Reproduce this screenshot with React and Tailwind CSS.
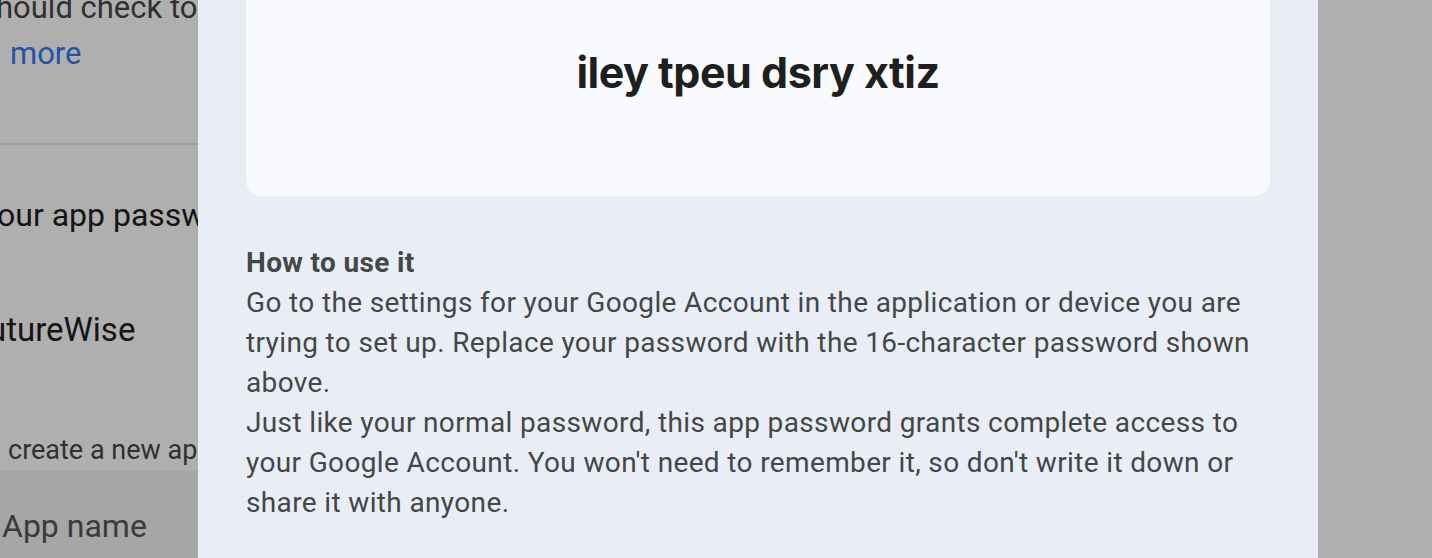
export default function App() {
  return (
    <div className="flex h-[558px] w-[1432px] overflow-hidden bg-[#afafaf] font-['Roboto',_'Liberation_Sans',_sans-serif]">
      {/* page behind the scrim */}
      <div className="flex w-[198px] shrink-0 flex-col overflow-hidden whitespace-nowrap">
        <p className="ml-[-4px] mt-[-12px] text-[31px] leading-[40px] text-[#2f3030]">hould check to</p>
        <p className="ml-[10px] mt-[6px] text-[31px] leading-[40px] text-[#2552a6]">more</p>
        <div className="mt-[69px] h-[2px] bg-[#9d9d9d]" />
        <p className="ml-[-3px] mt-[50px] text-[32px] leading-[40px] text-[#151515]">our app passwords</p>
        <p className="ml-[-12px] mt-[75px] text-[33px] leading-[40px] text-[#151515]">utureWise</p>
        <p className="ml-[8px] mt-[80px] text-[27px] leading-[40px] text-[#2f3030]">create a new app</p>
        <div className="mt-[1px] flex-1 bg-[#a5a6a5] pt-[35px]">
          <p className="ml-[2px] text-[32px] leading-[40px] text-[#3a3b3b]">App name</p>
        </div>
      </div>

      {/* dialog */}
      <div className="flex w-[1120px] shrink-0 flex-col bg-[#e9eef6] px-[48px]">
        <div className="flex h-[196px] items-start justify-center rounded-b-[16px] bg-[#f8fafd] pt-[44px]">
          <span className="font-['Inter',_sans-serif] text-[43px] font-bold leading-[56px] tracking-[-0.5px] text-[#1f1f1f]">iley tpeu dsry xtiz</span>
        </div>
        <div className="mt-[47px] text-[28px] leading-[40px] tracking-[0.36px] text-[#444746]">
          <p className="font-bold">How to use it</p>
          <p>
            Go to the settings for your Google Account in the application or device you are trying to set up. Replace your password with the 16-character password shown above.
          </p>
          <p>
            Just like your normal password, this app password grants complete access to your Google Account. You won't need to remember it, so don't write it down or share it with anyone.
          </p>
        </div>
      </div>

      <div className="flex-1 bg-[#afafaf]" />
    </div>
  );
}
